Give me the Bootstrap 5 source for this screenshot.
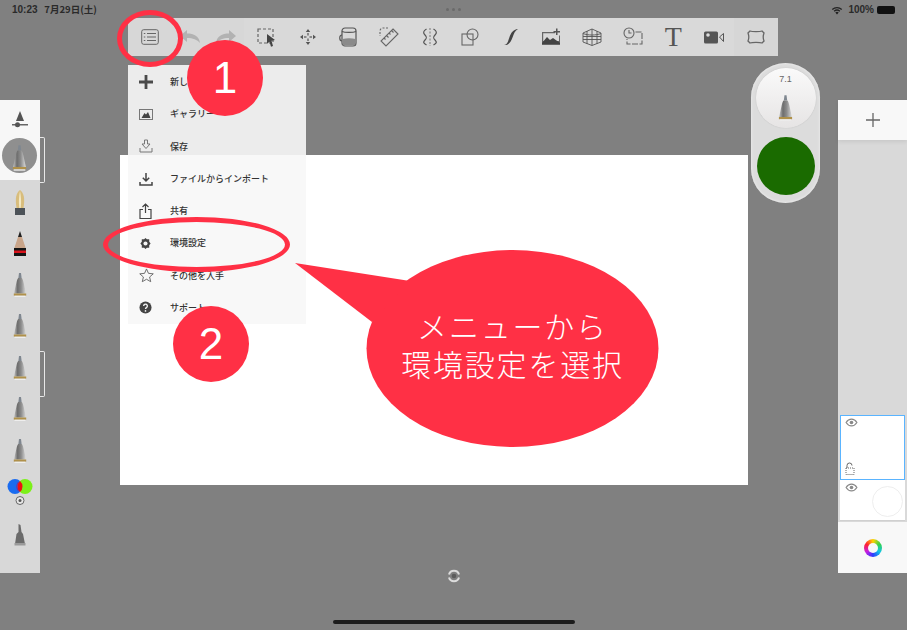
<!DOCTYPE html>
<html lang="ja">
<head>
    <meta charset="UTF-8">
    <meta name="viewport" content="width=device-width, initial-scale=1.0">
    <title>メニューから環境設定を選択</title>
    <link href="https://cdn.jsdelivr.net/npm/bootstrap@5.3.3/dist/css/bootstrap.min.css" rel="stylesheet">
    <style>
        html, body { margin: 0; background: #808080; }
        body { font-family: "Liberation Sans", "Noto Sans CJK JP", sans-serif; overflow: hidden; }
        .stage { position: relative; width: 907px; height: 630px; background: #808080; overflow: hidden; }

        .status-row { height: 18px; padding: 1px 12px 0 12px; font-size: 10px; font-weight: 700; color: #2a2a2a; line-height: 17px; white-space: nowrap; }
        .status-row .cjk { font-family: "Noto Sans CJK JP", sans-serif; font-size: 9.5px; margin-left: 4px; }
        .top-dots { gap: 3px; }
        .top-dots i { display: block; width: 3px; height: 3px; border-radius: 50%; background: #6a6a6a; }
        .batt { width: 18px; height: 8px; border-radius: 2px; background: #111; margin-left: 3px; }

        .tool-row { margin-left: 128px; width: 650px; height: 38px; background: #d9d9d9; }
        .tool-slot { height: 38px; flex: 0 0 auto; }
        .slot-a { width: 44px; background: #d7d7d7; }
        .slot-b { width: 36px; background: #d7d7d7; }
        .slot-c { width: 40.6px; }
        .slot-first { margin-left: 3px; }
        .slot-d { width: 43.8px; background: #d6d6d6; }
        .tool-t { font-family: "Liberation Serif", serif; font-size: 28px; color: #555; line-height: 1; }

        .main-row { height: 574px; }
        .left-rail { width: 39.5px; height: 473px; margin-top: 44px; background: #d8d8d8; flex: 0 0 auto; }
        .rail-top { height: 80px; background: #f7f7f7; }
        .rail-slider { height: 38px; }
        .rail-pick { width: 35px; height: 35px; margin-left: 2px; background: #8f8f8f; }
        .rail-slot { height: 41.5px; }
        .rail-gap { height: 2px; }
        .rail-bracket { position: absolute; left: 39.5px; width: 5px; border: 1px solid #e8e8e8; border-left: 0; border-radius: 0 2px 2px 0; }
        .bracket-a { top: 137px; height: 46px; }
        .bracket-b { top: 351px; height: 46px; }

        .paper { width: 628px; height: 330px; margin: 99px 0 0 80.5px; background: #fff; flex: 0 0 auto; }

        .pill { width: 69px; height: 140px; margin: 7px 0 0 3px; border-radius: 35px; background: #dcdcdc; box-shadow: inset 0 0 3px #f4f4f4; flex: 0 0 auto; padding-top: 5px; }
        .pill-size { width: 60px; height: 60px; background: linear-gradient(#fafafa, #e6e4e4); overflow: hidden; font-size: 9px; color: #666; padding-top: 5px; box-shadow: 0 0 1px #aaa; }
        .pill-colour { width: 58px; height: 58px; margin-top: 9px; background: #1a6b00; }

        .right-rail { width: 69px; height: 473px; margin: 44px 0 0 18px; background: #d9d9d9; flex: 0 0 auto; }
        .plus-box { height: 40px; background: #f8f8f8; box-shadow: 0 2px 4px rgba(0,0,0,.08); font-size: 0; }
        .thumb-box { padding: 0 2px 0 1.5px; }
        .thumb-on { height: 65px; background: #fff; border: 1.5px solid #5ab4ff; padding: 2px 0 0 4px; }
        .thumb-off { height: 41px; background: #fff; position: relative; padding: 3px 0 0 5px; border-bottom: 1px solid #d0d0d0; }
        .thumb-circle { position: absolute; right: 2px; top: 6px; width: 31px; height: 31px; border: 1px solid #eee; border-radius: 50%; }
        .swatch-box { height: 51px; margin-top: 1px; background: #f8f8f8; }
        .hue-ring { width: 18px; height: 18px; background: conic-gradient(#ffd400, #35d24a, #10c6e6, #2b3cff, #c81ee0, #ff2030, #ffd400); }
        .hue-ring::after { content: ""; display: block; width: 10px; height: 10px; margin: 4px; border-radius: 50%; background: #f8f8f8; }

        .file-menu { position: absolute; left: 128px; top: 65px; width: 178px; height: 259px; background: rgba(247,247,247,.9); padding-top: .6px; }
        .menu-line { height: 32.4px; font-family: "Noto Sans CJK JP", sans-serif; font-size: 9px; font-weight: 500; color: #333; white-space: nowrap; }
        .menu-ico { width: 42px; flex: 0 0 auto; padding-left: 11px; line-height: 0; }

        .sync-mark { position: absolute; left: 447px; top: 569px; }
        .home-bar { position: absolute; left: 333px; top: 620px; width: 242px; height: 4px; background: #1c1c1c; }

        .red-ring { position: absolute; border: 5px solid #ff3045; }
        .ring-one { left: 117px; top: 10px; width: 66px; height: 57px; }
        .ring-two { left: 103px; top: 217px; width: 187px; height: 55px; }
        .red-num { position: absolute; width: 76px; height: 76px; background: #ff3045; color: #fff; font-size: 44px; line-height: 1; }
        .num-one { left: 187px; top: 40px; }
        .num-two { left: 173px; top: 306px; }
        .speech-shape { position: absolute; left: 0; top: 0; }
        .speech-text { position: absolute; left: 367px; top: 306px; width: 291px; font-family: "Noto Sans CJK JP", sans-serif; font-size: 30px; font-weight: 300; line-height: 38px; color: #fff; letter-spacing: 1.8px; }
    </style>
</head>
<body>
    <svg width="0" height="0" class="position-absolute">
        <defs>
            <linearGradient id="steel" x1="0" x2="1" y1="0" y2="0">
                <stop offset="0" stop-color="#c4c4c4"/>
                <stop offset=".3" stop-color="#6d6d6d"/>
                <stop offset=".6" stop-color="#8d8d8d"/>
                <stop offset="1" stop-color="#dadada"/>
            </linearGradient>
            <symbol id="nib" viewBox="0 0 16 26">
                <path d="M7 0h2l.6 5H6.400z" fill="#7f8790"/>
                <path d="M6.200 5h3.600c1 1 1.400 3 1.900 5l2.300 10.500H2L4.300 10c.5-2 .9-4 1.900-5z" fill="url(#steel)"/>
                <rect x="1.800" y="20.500" width="12.400" height="2.200" fill="#b0914a"/>
                <rect x="2.500" y="22.700" width="11" height="1.300" fill="#eeeeee"/>
            </symbol>
            <symbol id="eye" viewBox="0 0 14 10">
                <path d="M1 5c3-5 9-5 12 0-3 5-9 5-12 0z" fill="none" stroke="#888" stroke-width="1.300"/>
                <circle cx="7" cy="5" r="2" fill="#888"/>
            </symbol>
        </defs>
    </svg>

    <div class="stage">
        <div class="status-row d-flex align-items-center justify-content-between">
            <span style="width:150px">10:23&nbsp;<span class="cjk">7月29日(土)</span></span>
            <span class="top-dots d-flex"><i></i><i></i><i></i></span>
            <span class="d-flex align-items-center justify-content-end" style="width:150px">
                <svg width="14" height="10" viewBox="0 0 14 10" class="me-1"><path d="M7 9.500 5.300 7.500a2.500 2.500 0 0 1 3.400 0zM3.700 5.800a5 5 0 0 1 6.600 0l-.9 1a3.700 3.700 0 0 0-4.800 0zM1.800 3.900a8 8 0 0 1 10.400 0l-.9 1a6.600 6.600 0 0 0-8.600 0z" fill="#222"/></svg>
                100%<span class="batt"></span>
            </span>
        </div>

        <div class="tool-row d-flex">
            <div class="tool-slot slot-a d-flex align-items-center justify-content-center">
                <svg width="18" height="16" viewBox="0 0 18 16" fill="none" stroke="#666"><rect x=".7" y=".7" width="16.600" height="14.600" rx="2"/><path d="M6 4.500h9M6 8h9M6 11.500h9M2.800 4.500h1.500M2.800 8h1.500M2.800 11.500h1.500" stroke-width="1.200"/></svg>
            </div>
            <div class="tool-slot slot-b d-flex align-items-center justify-content-center">
                <svg width="22" height="14" viewBox="0 0 22 14"><path d="M1 6 8 0v3.500c7 0 12 2.500 13 9.500-3-3.500-7-5-13-5v4z" fill="#b2b2b2"/></svg>
            </div>
            <div class="tool-slot slot-b d-flex align-items-center justify-content-center">
                <svg width="22" height="14" viewBox="0 0 22 14"><path d="M21 6 14 0v3.500C7 3.500 2 6 1 13c3-3.500 7-5 13-5v4z" fill="#b2b2b2"/></svg>
            </div>
            <div class="tool-slot slot-c slot-first d-flex align-items-center justify-content-center">
                <svg width="20" height="20" viewBox="0 0 20 20" fill="none"><rect x="1" y="2" width="15" height="14" stroke="#666" stroke-width="1.200" stroke-dasharray="3 2"/><path d="M10 7l8 6-3.500.7L16 19l-2 .7-1.500-5-2.500 2z" fill="#444"/></svg>
            </div>
            <div class="tool-slot slot-c d-flex align-items-center justify-content-center">
                <svg width="18" height="18" viewBox="0 0 18 18" fill="#555"><path d="M9 1l2.200 3H6.800zM9 17l-2.200-3h4.400zM1 9l3-2.200v4.400zM17 9l-3 2.200V6.800z"/><rect x="5" y="8.400" width="2.500" height="1.200"/><rect x="10.500" y="8.400" width="2.500" height="1.200"/><rect x="8.400" y="5" width="1.200" height="2.500"/><rect x="8.400" y="10.500" width="1.200" height="2.500"/></svg>
            </div>
            <div class="tool-slot slot-c d-flex align-items-center justify-content-center">
                <svg width="18" height="20" viewBox="0 0 18 20" fill="none" stroke="#555" stroke-width="1.200"><rect x="3" y="1" width="14" height="18" rx="3"/><path d="M3 4.500c3 1.200 11 1.200 14 0M3 8c-3 0-3 6 0 6"/><path d="M3.500 12c4-1 9-1 13 0v5c0 1-1 1.500-2 1.500h-9c-1 0-2-.5-2-1.500z" fill="#8a8a8a" stroke="none"/></svg>
            </div>
            <div class="tool-slot slot-c d-flex align-items-center justify-content-center">
                <svg width="20" height="20" viewBox="0 0 20 20" fill="none" stroke="#666" stroke-width="1.100"><path d="M14 2l5 5L7 19l-5-5z"/><path d="M5 11l1.500 1.500M7.500 8.500l2 2M10 6l1.500 1.500M12.500 3.500l2 2"/><path d="M9 1H4a3 3 0 0 0-3 3v5" stroke-dasharray="2 1.500"/></svg>
            </div>
            <div class="tool-slot slot-c d-flex align-items-center justify-content-center">
                <svg width="20" height="18" viewBox="0 0 20 18" fill="none" stroke="#555" stroke-width="1.200"><path d="M10 0v18" stroke="#888" stroke-dasharray="2 1.500"/><path d="M6.500 1C3 3 3 5 5 7s2 3 0 5-2 3 1.500 5M13.500 1c3.500 2 3.500 4 1.500 6s-2 3 0 5 2 3-1.500 5"/></svg>
            </div>
            <div class="tool-slot slot-c d-flex align-items-center justify-content-center">
                <svg width="18" height="18" viewBox="0 0 18 18" fill="none" stroke="#666" stroke-width="1.100"><circle cx="11.500" cy="6.500" r="5.500"/><rect x="1" y="6" width="11" height="11"/></svg>
            </div>
            <div class="tool-slot slot-c d-flex align-items-center justify-content-center">
                <svg width="16" height="18" viewBox="0 0 16 18"><path d="M1 17c3.500-.5 4-3.500 5.500-8C8 5 10 1.500 15 1c-3 1.500-4 4.500-5.500 8.500C8 14 5.500 17.500 1 17z" fill="#444"/></svg>
            </div>
            <div class="tool-slot slot-c d-flex align-items-center justify-content-center">
                <svg width="20" height="18" viewBox="0 0 20 18"><path d="M1 4h13v1.200H2.200V13H1zM1 13h17V7.500h1V17H1z" fill="#666"/><path d="M1 15l5-6 3 3 3-2 7 5v1H1z" fill="#444"/><path d="M15 .500h1.500V3H19v1.500h-2.500V7H15V4.500h-2.500V3H15z" fill="#555"/></svg>
            </div>
            <div class="tool-slot slot-c d-flex align-items-center justify-content-center">
                <svg width="20" height="18" viewBox="0 0 20 18" fill="none" stroke="#555" stroke-width=".9"><path d="M10 1l9 4v9l-9 3.500L1 14V5zM1 8.500h18M1 11.500h18M5 3v13M15 3v13M10 1v16.500M1 5.500c5 2 13 2 18 0"/></svg>
            </div>
            <div class="tool-slot slot-c d-flex align-items-center justify-content-center">
                <svg width="20" height="20" viewBox="0 0 20 20" fill="none" stroke="#666" stroke-width="1.100"><circle cx="6" cy="6" r="5"/><path d="M6 3v3h2.500M12.500 5H19v12H4v-5" stroke-dasharray="6 1.500"/></svg>
            </div>
            <div class="tool-slot slot-c d-flex align-items-center justify-content-center"><span class="tool-t">T</span></div>
            <div class="tool-slot slot-c d-flex align-items-center justify-content-center">
                <svg width="20" height="13" viewBox="0 0 20 13"><rect width="14" height="12" y=".5" rx="1.500" fill="#555"/><circle cx="4" cy="4" r="1.800" fill="#ddd"/><path d="M15.500 6l4-3.500v8z" fill="none" stroke="#555"/></svg>
            </div>
            <div class="tool-slot slot-d d-flex align-items-center justify-content-center">
                <svg width="18" height="14" viewBox="0 0 18 14" fill="none" stroke="#666" stroke-width="1.300"><path d="M3 1c2 .8 10 .8 12 0l2 2c-.8 2-.8 6 0 8l-2 2c-2-.8-10-.8-12 0l-2-2c.8-2 .8-6 0-8z"/></svg>
            </div>
        </div>

        <div class="main-row d-flex">
            <div class="left-rail">
                <div class="rail-top">
                    <div class="rail-slider d-flex align-items-center justify-content-center">
                        <svg width="18" height="20" viewBox="0 0 18 20"><path d="M9 2l4 10H5z" fill="#555"/><rect x="1" y="15" width="16" height="1.500" fill="#666"/><circle cx="6.500" cy="15.700" r="2.500" fill="#555"/></svg>
                    </div>
                    <div class="rail-pick rounded-circle d-flex align-items-end justify-content-center">
                        <svg width="17" height="28"><use href="#nib"/></svg>
                    </div>
                </div>
                <div class="rail-gap"></div>
                <div class="rail-slot d-flex align-items-center justify-content-center">
                    <svg width="14" height="28" viewBox="0 0 14 28"><path d="M7 1c4 3 5 8 3.500 18h-7C2 9 3 4 7 1z" fill="#d8bd7c"/><path d="M7 2c1 5 1.500 11 .7 17H6.300C5.500 13 6 7 7 2z" fill="#f3e8c4"/><rect x="2" y="19" width="10" height="7" fill="#4c5258"/></svg>
                </div>
                <div class="rail-slot d-flex align-items-center justify-content-center">
                    <svg width="14" height="26" viewBox="0 0 14 26"><path d="M7 0l2 6H5z" fill="#222"/><path d="M5 6h4l4 12H1z" fill="#c9a58a"/><rect x="1" y="17" width="12" height="8" fill="#141414"/><rect x="1" y="19.500" width="12" height="2.500" fill="#d8141c"/></svg>
                </div>
                <div class="rail-slot d-flex align-items-center justify-content-center"><svg width="16" height="26"><use href="#nib"/></svg></div>
                <div class="rail-slot d-flex align-items-center justify-content-center"><svg width="16" height="26"><use href="#nib"/></svg></div>
                <div class="rail-slot d-flex align-items-center justify-content-center"><svg width="16" height="26"><use href="#nib"/></svg></div>
                <div class="rail-slot d-flex align-items-center justify-content-center"><svg width="16" height="26"><use href="#nib"/></svg></div>
                <div class="rail-slot d-flex align-items-center justify-content-center"><svg width="16" height="26"><use href="#nib"/></svg></div>
                <div class="rail-slot d-flex align-items-center justify-content-center">
                    <svg width="26" height="30" viewBox="0 0 26 30">
                        <circle cx="8" cy="8.500" r="7.500" fill="#1a6cf0"/>
                        <circle cx="18" cy="8.500" r="7.500" fill="#7cf01a"/>
                        <path d="M13 2.900a7.500 7.500 0 0 1 0 11.200 7.500 7.500 0 0 1 0-11.200z" fill="#ee1212"/>
                        <path d="M10.600 4.500a7.500 7.500 0 0 0 0 8 7 7 0 0 0 2.400 1.600 7.500 7.500 0 0 1 0-11.200 7 7 0 0 0-2.400 1.600z" fill="#7a2aa0"/>
                        <circle cx="13" cy="22.500" r="4" fill="#e8e8e8" stroke="#666"/>
                        <circle cx="13" cy="22.500" r="1.500" fill="#555"/>
                    </svg>
                </div>
                <div class="rail-slot d-flex align-items-center justify-content-center">
                    <svg width="14" height="26" viewBox="0 0 14 26"><path d="M5.500 2l2 1 1 7 1.500 2 2 10H2l1.500-10 2-2z" fill="#6b6b6b"/><rect x="1.500" y="21" width="11" height="2.500" fill="#9a9a9a"/></svg>
                </div>
            </div>
            <div class="paper"></div>
            <div class="pill d-flex flex-column align-items-center">
                <div class="pill-size rounded-circle text-center d-flex flex-column align-items-center">
                    <span>7.1</span>
                    <svg width="17" height="28" class="mt-2"><use href="#nib"/></svg>
                </div>
                <div class="pill-colour rounded-circle"></div>
            </div>
            <div class="right-rail d-flex flex-column">
                <div class="plus-box d-flex align-items-center justify-content-center">
                    <svg width="14" height="14" viewBox="0 0 14 14"><path d="M7 0v14M0 7h14" stroke="#666" stroke-width="1.300"/></svg>
                </div>
                <div class="flex-grow-1"></div>
                <div class="thumb-box">
                    <div class="thumb-on d-flex flex-column justify-content-between">
                        <svg width="13" height="9"><use href="#eye"/></svg>
                        <svg width="10" height="13" viewBox="0 0 10 13" class="mb-1" fill="none" stroke="#666"><path d="M2 6V3.500a2.500 2.500 0 0 1 5 0"/><rect x="1" y="6" width="8" height="6.500" stroke-dasharray="1 1"/></svg>
                    </div>
                    <div class="thumb-off">
                        <svg width="13" height="9" class="d-block"><use href="#eye"/></svg>
                        <div class="thumb-circle"></div>
                    </div>
                </div>
                <div class="swatch-box d-flex align-items-center justify-content-center">
                    <div class="hue-ring rounded-circle"></div>
                </div>
            </div>
        </div>

        <div class="file-menu d-flex flex-column">
            <div class="menu-line d-flex align-items-center">
                <span class="menu-ico"><svg width="14" height="14" viewBox="0 0 14 14"><path d="M5.600 0h2.800v5.600H14v2.800H8.400V14H5.600V8.400H0V5.600h5.600z" fill="#4a4a4a"/></svg></span>新し
            </div>
            <div class="menu-line d-flex align-items-center">
                <span class="menu-ico"><svg width="14" height="11" viewBox="0 0 14 11"><rect x=".5" y=".5" width="13" height="10" fill="none" stroke="#777"/><path d="M2.500 9l3-5 1.500 1.500L9 3l2.500 6z" fill="#444"/></svg></span>ギャラリー
            </div>
            <div class="menu-line d-flex align-items-center">
                <span class="menu-ico"><svg width="14" height="14" viewBox="0 0 14 14" fill="none" stroke="#777"><path d="M5.500 1h3v4h2.500L7 9.500 3 5h2.500zM1 9v4h12V9"/></svg></span>保存
            </div>
            <div class="menu-line d-flex align-items-center">
                <span class="menu-ico"><svg width="14" height="14" viewBox="0 0 14 14" fill="none" stroke="#444" stroke-width="1.500"><path d="M7 1v8M3.800 5.800 7 9l3.200-3.200M1 10v3h12v-3"/></svg></span>ファイルからインポート
            </div>
            <div class="menu-line d-flex align-items-center">
                <span class="menu-ico"><svg width="13" height="16" viewBox="0 0 13 16" fill="none" stroke="#444" stroke-width="1.200"><path d="M6.500 10V1M3.500 4l3-3 3 3M4 6.500H1v9h11v-9H9"/></svg></span>共有
            </div>
            <div class="menu-line d-flex align-items-center">
                <span class="menu-ico"><svg width="13" height="13" viewBox="0 0 14 14"><path d="M7 1l1.500 1.500h2.500V5L12.500 7 11 9v2.500H8.500L7 13l-1.500-1.500H3V9L1.500 7 3 5V2.500h2.500z" fill="#444"/><circle cx="7" cy="7" r="2.200" fill="#f6f6f6"/></svg></span>環境設定
            </div>
            <div class="menu-line d-flex align-items-center">
                <span class="menu-ico"><svg width="15" height="15" viewBox="0 0 16 16"><path d="M8 1l2.100 4.700 5.100.5-3.900 3.400 1.200 5L8 12l-4.500 2.600 1.200-5L.8 6.200l5.100-.5z" fill="none" stroke="#666"/></svg></span>その他を入手
            </div>
            <div class="menu-line d-flex align-items-center">
                <span class="menu-ico"><svg width="13" height="13" viewBox="0 0 14 14"><circle cx="7" cy="7" r="6.500" fill="#444"/><path d="M5 5.300a2 2 0 1 1 3 1.800c-.7.400-1 .8-1 1.500" fill="none" stroke="#f6f6f6" stroke-width="1.400"/><circle cx="7" cy="10.700" r=".9" fill="#f6f6f6"/></svg></span>サポート
            </div>
        </div>

        <svg class="sync-mark" width="14" height="14" viewBox="0 0 14 14" fill="none" stroke="#dcdcdc" stroke-width="2"><path d="M2 5.500a5.200 5.200 0 0 1 10 0M12 8.500a5.200 5.200 0 0 1-10 0"/><circle cx="7" cy="7" r="2.300" fill="#5c5c5c" stroke="none"/></svg>
        <div class="home-bar rounded-pill"></div>

        <div class="rail-bracket bracket-a"></div>
        <div class="rail-bracket bracket-b"></div>

        <div class="red-ring ring-one rounded-circle"></div>
        <div class="red-ring ring-two rounded-circle"></div>
        <div class="red-num num-one rounded-circle d-flex align-items-center justify-content-center">1</div>
        <div class="red-num num-two rounded-circle d-flex align-items-center justify-content-center">2</div>

        <svg class="speech-shape" width="907" height="630">
            <ellipse cx="512.500" cy="348.500" rx="146" ry="98.500" fill="#ff3045"/>
            <path d="M295 263 410 281 372 322z" fill="#ff3045"/>
        </svg>
        <div class="speech-text text-center">メニューから<br>環境設定を選択</div>
    </div>

    <script src="https://cdn.jsdelivr.net/npm/bootstrap@5.3.3/dist/js/bootstrap.bundle.min.js"></script>
</body>
</html>
